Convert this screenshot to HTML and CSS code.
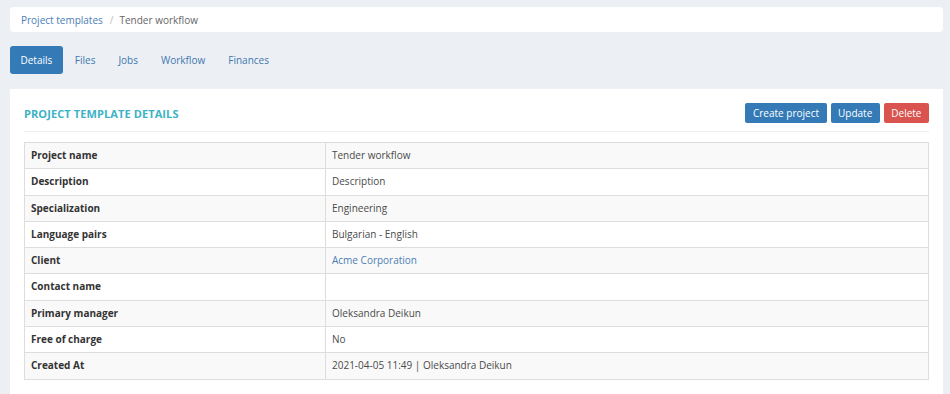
FILE: index.html
```html
<!DOCTYPE html>
<html>
<head>
<meta charset="utf-8">
<link rel="stylesheet" href="styles.css">
</head>
<body>
<div class="page">
  <nav class="breadcrumb">
    <a class="crumb-link" href="#">Project templates</a>
    <span class="crumb-sep">/</span>
    <span class="crumb-current">Tender workflow</span>
  </nav>
  <ul class="tabs">
    <li class="tab active">Details</li>
    <li class="tab">Files</li>
    <li class="tab">Jobs</li>
    <li class="tab">Workflow</li>
    <li class="tab">Finances</li>
  </ul>
  <section class="card">
    <header class="card-head">
      <h2 class="card-title">PROJECT TEMPLATE DETAILS</h2>
      <div class="actions">
        <button class="btn btn-primary">Create project</button>
        <button class="btn btn-primary">Update</button>
        <button class="btn btn-danger">Delete</button>
      </div>
    </header>
    <table class="details">
      <tr><th>Project name</th><td>Tender workflow</td></tr>
      <tr><th>Description</th><td>Description</td></tr>
      <tr><th>Specialization</th><td>Engineering</td></tr>
      <tr><th>Language pairs</th><td>Bulgarian - English</td></tr>
      <tr><th>Client</th><td><a class="link" href="#">Acme Corporation</a></td></tr>
      <tr><th>Contact name</th><td></td></tr>
      <tr><th>Primary manager</th><td>Oleksandra Deikun</td></tr>
      <tr><th>Free of charge</th><td>No</td></tr>
      <tr><th>Created At</th><td>2021-04-05 11:49 | Oleksandra Deikun</td></tr>
    </table>
  </section>
</div>
</body>
</html>
```
FILE: styles.css
```css
* { box-sizing: border-box; }
html, body { margin: 0; padding: 0; }
body {
  background: #ecf0f5;
  font-family: "Open Sans", "Liberation Sans", sans-serif;
  font-size: 10px;
  color: #333;
  width: 950px;
  height: 394px;
  overflow: hidden;
}
.page {
  padding: 7px 7px 0 10px;
}
.breadcrumb {
  background: #fff;
  border-radius: 4px;
  height: 25px;
  display: flex;
  align-items: center;
  padding: 0 11px;
  font-size: 10px;
}
.crumb-link { color: #4a7eb6; text-decoration: none; }
.crumb-sep { color: #bbb; margin: 0 6px 0 7px; }
.crumb-current { color: #666; }
.tabs {
  list-style: none;
  margin: 14px 0 0 0;
  padding: 0;
  display: flex;
  height: 28px;
}
.tab {
  padding: 0 11px;
  line-height: 28px;
  color: #3f76ad;
  border-radius: 3px;
  margin-right: 1px;
}
.tab.active {
  background: #337ab7;
  color: #fff;
  padding: 0 10.5px;
}
.card {
  background: #fff;
  margin-top: 15px;
  padding: 14px 14px 13px 14px;
  height: 305px;
}
.card-head {
  display: flex;
  align-items: center;
  justify-content: space-between;
  border-bottom: 1px solid #eee;
  padding-bottom: 8px;
  margin-bottom: 10px;
}
.card-title {
  margin: 0;
  font-size: 11px;
  font-weight: 700;
  color: #3bb2c5;
  letter-spacing: 0.1px;
}
.actions { display: flex; gap: 4px; }
.btn {
  font-family: inherit;
  font-size: 10px;
  height: 20px;
  border: none;
  border-radius: 2px;
  color: #fff;
  padding: 0 7.5px;
  line-height: 20px;
}
.btn-primary { background: #337ab7; }
.btn-danger { background: #d9534f; }
.details {
  width: 100%;
  border-collapse: collapse;
  border: 1px solid #ddd;
}
.details tr:nth-child(odd) { background: #f9f9f9; }
.details th, .details td {
  border: 1px solid #ddd;
  padding: 5px 6px;
  line-height: 15.3px;
  text-align: left;
  font-size: 10px;
}
.details th {
  width: 301px;
  font-weight: 700;
  color: #333;
}
.details td { color: #4a4a4a; }
.link { color: #4a7eb6; text-decoration: none; }
```
